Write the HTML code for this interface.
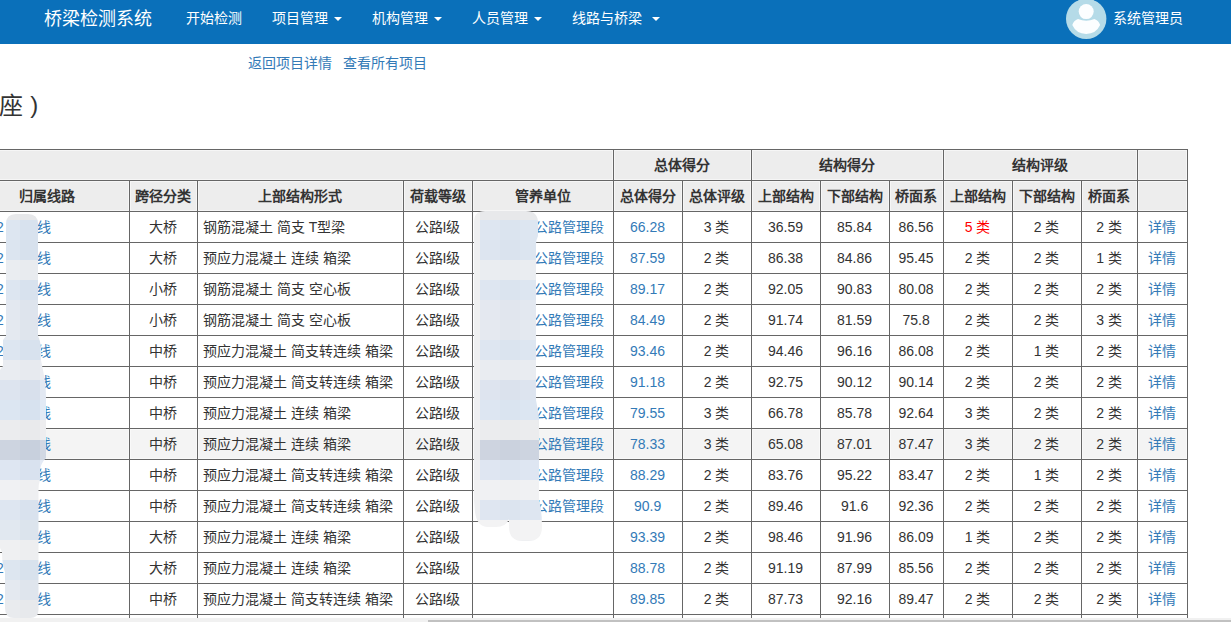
<!DOCTYPE html>
<html lang="zh-CN">
<head>
<meta charset="utf-8">
<title>桥梁检测系统</title>
<style>
html,body{margin:0;padding:0;}
html{overflow:hidden;width:1231px;height:622px;}
body{width:1231px;height:622px;overflow:hidden;background:#fff;
  font-family:"Liberation Sans",sans-serif;font-size:14px;color:#333;}
#wrap{position:relative;width:1231px;height:622px;overflow:hidden;contain:paint;}
.nav{position:absolute;left:0;top:0;width:1231px;height:44px;background:#0a70ba;}
.nav span.t{position:absolute;color:#fff;white-space:nowrap;line-height:20px;top:8px;font-size:14px;}
.nav span.brand{font-size:18px;left:44px;top:9px;line-height:20px;}
.caret{position:absolute;top:17px;width:0;height:0;border-top:4px solid #fff;border-left:4px solid transparent;border-right:4px solid transparent;}
.lnk{position:absolute;top:53px;line-height:20px;color:#337ab7;white-space:nowrap;}
h3{position:absolute;left:0;top:90px;margin:0;font-size:24px;font-weight:normal;line-height:32px;color:#333;white-space:nowrap;}
table{position:absolute;left:-36px;top:149px;border-collapse:separate;border-spacing:0;table-layout:fixed;
  border-top:1px solid #666;border-left:1px solid #666;width:1224px;}
td,th{box-sizing:border-box;height:31px;padding:0;line-height:30px;border-right:1px solid #666;border-bottom:1px solid #666;
  text-align:center;white-space:nowrap;overflow:hidden;font-size:14px;padding-right:1px;}
th{background:#ededed;font-weight:bold;color:#333;box-shadow:inset 0 0 0 1px #f6f6f6;}
td.l{text-align:left;padding-left:5px;}
td.r{text-align:right;padding-right:9px;}
a{color:#337ab7;text-decoration:none;}
.red{color:#f00;}
tr.hov td{background:#f4f4f4;box-shadow:inset 0 0 0 1px #f9f9f9;}
.c1{display:inline-block;margin-left:26px;}
.gap{display:inline-block;width:33px;}
.no2{display:inline-block;width:8px;}
.sb{position:absolute;left:0;top:618px;width:1231px;height:4px;background:#f1f1f1;}
.sbt{position:absolute;left:428px;top:620px;width:803px;height:2px;background:#c1c1c1;}
.blob{position:absolute;}
</style>
</head>
<body>
<div id="wrap">
<div class="nav">
  <span class="t brand">桥梁检测系统</span>
  <span class="t" style="left:186px">开始检测</span>
  <span class="t" style="left:272px">项目管理</span><i class="caret" style="left:334px"></i>
  <span class="t" style="left:372px">机构管理</span><i class="caret" style="left:434px"></i>
  <span class="t" style="left:472px">人员管理</span><i class="caret" style="left:534px"></i>
  <span class="t" style="left:572px">线路与桥梁</span><i class="caret" style="left:652px"></i>
  <svg style="position:absolute;left:1065px;top:-2px" width="43" height="43" viewBox="1065 -2 43 43">
    <circle cx="1086.2" cy="18.8" r="20.2" fill="#b5dbe8"/>
    <circle cx="1086.2" cy="11.6" r="7.5" fill="#fcfeff"/>
    <path d="M1072.3 25 Q1073.6 20.6 1078 19.1 Q1086.2 22.6 1094.4 19.1 Q1098.8 20.6 1100.1 25 A15.3 15.3 0 0 1 1072.3 25 Z" fill="#fcfeff"/>
  </svg>
  <span class="t" style="left:1113px">系统管理员</span>
</div>
<span class="lnk" style="left:248px">返回项目详情</span>
<span class="lnk" style="left:343px">查看所有项目</span>
<h3><span style="margin-left:-1px">座 <span style="position:relative;top:-1px;left:0.5px">)</span></span></h3>
<table>
<colgroup>
<col style="width:165px"><col style="width:68px"><col style="width:206px"><col style="width:69px"><col style="width:141px">
<col style="width:69px"><col style="width:69px"><col style="width:69px"><col style="width:69px"><col style="width:54px">
<col style="width:69px"><col style="width:69px"><col style="width:56px"><col style="width:50px">
</colgroup>
<tr><th colspan="5"></th><th colspan="2">总体得分</th><th colspan="3">结构得分</th><th colspan="3">结构评级</th><th></th></tr>
<tr><th>归属线路</th><th>跨径分类</th><th>上部结构形式</th><th>荷载等级</th><th>管养单位</th><th>总体得分</th><th>总体评级</th><th>上部结构</th><th>下部结构</th><th>桥面系</th><th>上部结构</th><th>下部结构</th><th>桥面系</th><th></th></tr>
<tr><td class="l"><a class="c1">2<span class="gap"></span>线</a></td><td>大桥</td><td class="l">钢筋混凝土 简支 T型梁</td><td>公路I级</td><td class="r"><a class="c5">公路管理段</a></td><td><a>66.28</a></td><td>3 类</td><td>36.59</td><td>85.84</td><td>86.56</td><td><span class="red">5 类</span></td><td>2 类</td><td>2 类</td><td><a>详情</a></td></tr>
<tr><td class="l"><a class="c1">2<span class="gap"></span>线</a></td><td>大桥</td><td class="l">预应力混凝土 连续 箱梁</td><td>公路I级</td><td class="r"><a class="c5">公路管理段</a></td><td><a>87.59</a></td><td>2 类</td><td>86.38</td><td>84.86</td><td>95.45</td><td>2 类</td><td>2 类</td><td>1 类</td><td><a>详情</a></td></tr>
<tr><td class="l"><a class="c1">2<span class="gap"></span>线</a></td><td>小桥</td><td class="l">钢筋混凝土 简支 空心板</td><td>公路I级</td><td class="r"><a class="c5">公路管理段</a></td><td><a>89.17</a></td><td>2 类</td><td>92.05</td><td>90.83</td><td>80.08</td><td>2 类</td><td>2 类</td><td>2 类</td><td><a>详情</a></td></tr>
<tr><td class="l"><a class="c1">2<span class="gap"></span>线</a></td><td>小桥</td><td class="l">钢筋混凝土 简支 空心板</td><td>公路I级</td><td class="r"><a class="c5">公路管理段</a></td><td><a>84.49</a></td><td>2 类</td><td>91.74</td><td>81.59</td><td>75.8</td><td>2 类</td><td>2 类</td><td>3 类</td><td><a>详情</a></td></tr>
<tr><td class="l"><a class="c1">2<span class="gap"></span>线</a></td><td>中桥</td><td class="l">预应力混凝土 简支转连续 箱梁</td><td>公路I级</td><td class="r"><a class="c5">公路管理段</a></td><td><a>93.46</a></td><td>2 类</td><td>94.46</td><td>96.16</td><td>86.08</td><td>2 类</td><td>1 类</td><td>2 类</td><td><a>详情</a></td></tr>
<tr><td class="l"><a class="c1"><span class="no2"></span><span class="gap"></span>线</a></td><td>中桥</td><td class="l">预应力混凝土 简支转连续 箱梁</td><td>公路I级</td><td class="r"><a class="c5">公路管理段</a></td><td><a>91.18</a></td><td>2 类</td><td>92.75</td><td>90.12</td><td>90.14</td><td>2 类</td><td>2 类</td><td>2 类</td><td><a>详情</a></td></tr>
<tr><td class="l"><a class="c1"><span class="no2"></span><span class="gap"></span>线</a></td><td>中桥</td><td class="l">预应力混凝土 连续 箱梁</td><td>公路I级</td><td class="r"><a class="c5">公路管理段</a></td><td><a>79.55</a></td><td>3 类</td><td>66.78</td><td>85.78</td><td>92.64</td><td>3 类</td><td>2 类</td><td>2 类</td><td><a>详情</a></td></tr>
<tr class="hov"><td class="l"><a class="c1"><span class="no2"></span><span class="gap"></span>线</a></td><td>中桥</td><td class="l">预应力混凝土 连续 箱梁</td><td>公路I级</td><td class="r"><a class="c5">公路管理段</a></td><td><a>78.33</a></td><td>3 类</td><td>65.08</td><td>87.01</td><td>87.47</td><td>3 类</td><td>2 类</td><td>2 类</td><td><a>详情</a></td></tr>
<tr><td class="l"><a class="c1"><span class="no2"></span><span class="gap"></span>线</a></td><td>中桥</td><td class="l">预应力混凝土 简支转连续 箱梁</td><td>公路I级</td><td class="r"><a class="c5">公路管理段</a></td><td><a>88.29</a></td><td>2 类</td><td>83.76</td><td>95.22</td><td>83.47</td><td>2 类</td><td>1 类</td><td>2 类</td><td><a>详情</a></td></tr>
<tr><td class="l"><a class="c1"><span class="no2"></span><span class="gap"></span>线</a></td><td>中桥</td><td class="l">预应力混凝土 简支转连续 箱梁</td><td>公路I级</td><td class="r"><a class="c5">公路管理段</a></td><td><a>90.9</a></td><td>2 类</td><td>89.46</td><td>91.6</td><td>92.36</td><td>2 类</td><td>2 类</td><td>2 类</td><td><a>详情</a></td></tr>
<tr><td class="l"><a class="c1"><span class="no2"></span><span class="gap"></span>线</a></td><td>大桥</td><td class="l">预应力混凝土 连续 箱梁</td><td>公路I级</td><td class="r"></td><td><a>93.39</a></td><td>2 类</td><td>98.46</td><td>91.96</td><td>86.09</td><td>1 类</td><td>2 类</td><td>2 类</td><td><a>详情</a></td></tr>
<tr><td class="l"><a class="c1">2<span class="gap"></span>线</a></td><td>大桥</td><td class="l">预应力混凝土 连续 箱梁</td><td>公路I级</td><td class="r"></td><td><a>88.78</a></td><td>2 类</td><td>91.19</td><td>87.99</td><td>85.56</td><td>2 类</td><td>2 类</td><td>2 类</td><td><a>详情</a></td></tr>
<tr><td class="l"><a class="c1">2<span class="gap"></span>线</a></td><td>中桥</td><td class="l">预应力混凝土 简支转连续 箱梁</td><td>公路I级</td><td class="r"></td><td><a>89.85</a></td><td>2 类</td><td>87.73</td><td>92.16</td><td>89.47</td><td>2 类</td><td>2 类</td><td>2 类</td><td><a>详情</a></td></tr>
<tr><td></td><td></td><td></td><td></td><td></td><td></td><td></td><td></td><td></td><td></td><td></td><td></td><td></td><td></td></tr>
</table>
<svg style="position:absolute;left:0;top:0;pointer-events:none" width="1231" height="622" viewBox="0 0 1231 622" shape-rendering="crispEdges">
<defs>
<clipPath id="b1"><path d="M6 224 Q6 214 16 214 L28 214 Q38 214 38 224 L38 336 Q41 342 41 350 L41 360 Q42 366 43 370 Q46 385 46 397 L46 458 Q41 463 40 470 L40 480 Q38.5 484 38.5 490 L38.5 610 Q38.5 618 30 618 L14 618 Q5 618 5 608 L5 572 Q2 565 2 552 L0 548 L0 370 L3 366 L3 340 L6 336 Z"/></clipPath>
<clipPath id="b2"><path d="M474 222 Q474 211 485 211 L526 211 Q538 211 538 223 L538 236 Q536 240 536 244 L536 400 Q538 410 539 418 L539 500 Q542 510 542 527 Q542 541 528 541 L523 541 Q509 541 509 527 L509 519 Q506 527 496 527 L488 527 Q477 527 475 512 L474 500 Z"/></clipPath>
</defs>
<g clip-path="url(#b1)">
<rect x="0" y="200" width="20" height="20" fill="#e8e9eb"/>
<rect x="20" y="200" width="20" height="20" fill="#e6e7e9"/>
<rect x="40" y="200" width="20" height="20" fill="#eaeaec"/>
<rect x="0" y="220" width="20" height="20" fill="#dde6f1"/>
<rect x="20" y="220" width="20" height="20" fill="#d8e2ee"/>
<rect x="40" y="220" width="20" height="20" fill="#e2eaf4"/>
<rect x="0" y="240" width="20" height="20" fill="#dce5f0"/>
<rect x="20" y="240" width="20" height="20" fill="#d7e1ed"/>
<rect x="40" y="240" width="20" height="20" fill="#e1e9f3"/>
<rect x="0" y="260" width="20" height="20" fill="#eaedf1"/>
<rect x="20" y="260" width="20" height="20" fill="#e8ebef"/>
<rect x="40" y="260" width="20" height="20" fill="#eceef2"/>
<rect x="0" y="280" width="20" height="20" fill="#dde6f1"/>
<rect x="20" y="280" width="20" height="20" fill="#d8e2ee"/>
<rect x="40" y="280" width="20" height="20" fill="#e2eaf4"/>
<rect x="0" y="300" width="20" height="20" fill="#e3e8f0"/>
<rect x="20" y="300" width="20" height="20" fill="#dee4ed"/>
<rect x="40" y="300" width="20" height="20" fill="#e8ecf3"/>
<rect x="0" y="320" width="20" height="20" fill="#e4e9f0"/>
<rect x="20" y="320" width="20" height="20" fill="#dfe5ed"/>
<rect x="40" y="320" width="20" height="20" fill="#e9edf3"/>
<rect x="0" y="340" width="20" height="20" fill="#dde6f1"/>
<rect x="20" y="340" width="20" height="20" fill="#d8e2ee"/>
<rect x="40" y="340" width="20" height="20" fill="#e2eaf4"/>
<rect x="0" y="360" width="20" height="20" fill="#e9ecf1"/>
<rect x="20" y="360" width="20" height="20" fill="#e7eaef"/>
<rect x="40" y="360" width="20" height="20" fill="#ebedf2"/>
<rect x="0" y="380" width="20" height="20" fill="#dde4ef"/>
<rect x="20" y="380" width="20" height="20" fill="#d8e0ec"/>
<rect x="40" y="380" width="20" height="20" fill="#e2e8f2"/>
<rect x="0" y="400" width="20" height="20" fill="#dce6f2"/>
<rect x="20" y="400" width="20" height="20" fill="#d7e2ef"/>
<rect x="40" y="400" width="20" height="20" fill="#e1eaf5"/>
<rect x="0" y="420" width="20" height="20" fill="#ebecee"/>
<rect x="20" y="420" width="20" height="20" fill="#e9eaec"/>
<rect x="40" y="420" width="20" height="20" fill="#ededef"/>
<rect x="0" y="440" width="20" height="20" fill="#cdd4e0"/>
<rect x="20" y="440" width="20" height="20" fill="#c8d0dd"/>
<rect x="40" y="440" width="20" height="20" fill="#d2d8e3"/>
<rect x="0" y="460" width="20" height="20" fill="#dee6f2"/>
<rect x="20" y="460" width="20" height="20" fill="#d9e2ef"/>
<rect x="40" y="460" width="20" height="20" fill="#e3eaf5"/>
<rect x="0" y="480" width="20" height="20" fill="#f0f1f3"/>
<rect x="20" y="480" width="20" height="20" fill="#eeeff1"/>
<rect x="40" y="480" width="20" height="20" fill="#f2f2f4"/>
<rect x="0" y="500" width="20" height="20" fill="#dee6f1"/>
<rect x="20" y="500" width="20" height="20" fill="#d9e2ee"/>
<rect x="40" y="500" width="20" height="20" fill="#e3eaf4"/>
<rect x="0" y="520" width="20" height="20" fill="#e1e8f0"/>
<rect x="20" y="520" width="20" height="20" fill="#dce4ed"/>
<rect x="40" y="520" width="20" height="20" fill="#e6ecf3"/>
<rect x="0" y="540" width="20" height="20" fill="#eff0f2"/>
<rect x="20" y="540" width="20" height="20" fill="#edeef0"/>
<rect x="40" y="540" width="20" height="20" fill="#f1f1f3"/>
<rect x="0" y="560" width="20" height="20" fill="#dde6f0"/>
<rect x="20" y="560" width="20" height="20" fill="#d8e2ed"/>
<rect x="40" y="560" width="20" height="20" fill="#e2eaf3"/>
<rect x="0" y="580" width="20" height="20" fill="#e4e9f0"/>
<rect x="20" y="580" width="20" height="20" fill="#dfe5ed"/>
<rect x="40" y="580" width="20" height="20" fill="#e9edf3"/>
<rect x="0" y="600" width="20" height="20" fill="#e9ebee"/>
<rect x="20" y="600" width="20" height="20" fill="#e7e9ec"/>
<rect x="40" y="600" width="20" height="20" fill="#ebecef"/>
</g>
<g clip-path="url(#b2)">
<rect x="460" y="200" width="20" height="20" fill="#f0f0f0"/>
<rect x="480" y="200" width="20" height="20" fill="#e8e9eb"/>
<rect x="500" y="200" width="20" height="20" fill="#e7e8ea"/>
<rect x="520" y="200" width="20" height="20" fill="#e8e9eb"/>
<rect x="540" y="200" width="20" height="20" fill="#e9eaeb"/>
<rect x="460" y="220" width="20" height="20" fill="#eeeff1"/>
<rect x="480" y="220" width="20" height="20" fill="#dee6f1"/>
<rect x="500" y="220" width="20" height="20" fill="#dbe4ef"/>
<rect x="520" y="220" width="20" height="20" fill="#dde6f1"/>
<rect x="540" y="220" width="20" height="20" fill="#e0e8f2"/>
<rect x="460" y="240" width="20" height="20" fill="#eeeff1"/>
<rect x="480" y="240" width="20" height="20" fill="#dde5f0"/>
<rect x="500" y="240" width="20" height="20" fill="#dae3ee"/>
<rect x="520" y="240" width="20" height="20" fill="#dce5f0"/>
<rect x="540" y="240" width="20" height="20" fill="#dfe7f1"/>
<rect x="460" y="260" width="20" height="20" fill="#f0f1f1"/>
<rect x="480" y="260" width="20" height="20" fill="#eaedf1"/>
<rect x="500" y="260" width="20" height="20" fill="#e9ecf0"/>
<rect x="520" y="260" width="20" height="20" fill="#eaedf1"/>
<rect x="540" y="260" width="20" height="20" fill="#ebeef1"/>
<rect x="460" y="280" width="20" height="20" fill="#eeeff1"/>
<rect x="480" y="280" width="20" height="20" fill="#dee6f1"/>
<rect x="500" y="280" width="20" height="20" fill="#dbe4ef"/>
<rect x="520" y="280" width="20" height="20" fill="#dde6f1"/>
<rect x="540" y="280" width="20" height="20" fill="#e0e8f2"/>
<rect x="460" y="300" width="20" height="20" fill="#eff0f1"/>
<rect x="480" y="300" width="20" height="20" fill="#e4e8f0"/>
<rect x="500" y="300" width="20" height="20" fill="#e1e6ee"/>
<rect x="520" y="300" width="20" height="20" fill="#e3e8f0"/>
<rect x="540" y="300" width="20" height="20" fill="#e6eaf1"/>
<rect x="460" y="320" width="20" height="20" fill="#eff0f1"/>
<rect x="480" y="320" width="20" height="20" fill="#e5e9f0"/>
<rect x="500" y="320" width="20" height="20" fill="#e2e7ee"/>
<rect x="520" y="320" width="20" height="20" fill="#e4e9f0"/>
<rect x="540" y="320" width="20" height="20" fill="#e7ebf1"/>
<rect x="460" y="340" width="20" height="20" fill="#eeeff1"/>
<rect x="480" y="340" width="20" height="20" fill="#dee6f1"/>
<rect x="500" y="340" width="20" height="20" fill="#dbe4ef"/>
<rect x="520" y="340" width="20" height="20" fill="#dde6f1"/>
<rect x="540" y="340" width="20" height="20" fill="#e0e8f2"/>
<rect x="460" y="360" width="20" height="20" fill="#f0f0f1"/>
<rect x="480" y="360" width="20" height="20" fill="#e9ecf1"/>
<rect x="500" y="360" width="20" height="20" fill="#e8ebf0"/>
<rect x="520" y="360" width="20" height="20" fill="#e9ecf1"/>
<rect x="540" y="360" width="20" height="20" fill="#eaedf1"/>
<rect x="460" y="380" width="20" height="20" fill="#eeeff1"/>
<rect x="480" y="380" width="20" height="20" fill="#dee4ef"/>
<rect x="500" y="380" width="20" height="20" fill="#dbe2ed"/>
<rect x="520" y="380" width="20" height="20" fill="#dde4ef"/>
<rect x="540" y="380" width="20" height="20" fill="#e0e6f0"/>
<rect x="460" y="400" width="20" height="20" fill="#eeeff2"/>
<rect x="480" y="400" width="20" height="20" fill="#dde6f2"/>
<rect x="500" y="400" width="20" height="20" fill="#dae4f0"/>
<rect x="520" y="400" width="20" height="20" fill="#dce6f2"/>
<rect x="540" y="400" width="20" height="20" fill="#dfe8f3"/>
<rect x="460" y="420" width="20" height="20" fill="#f0f0f1"/>
<rect x="480" y="420" width="20" height="20" fill="#ebecee"/>
<rect x="500" y="420" width="20" height="20" fill="#eaebed"/>
<rect x="520" y="420" width="20" height="20" fill="#ebecee"/>
<rect x="540" y="420" width="20" height="20" fill="#ecedee"/>
<rect x="460" y="440" width="20" height="20" fill="#ebecee"/>
<rect x="480" y="440" width="20" height="20" fill="#ced4e0"/>
<rect x="500" y="440" width="20" height="20" fill="#cbd2de"/>
<rect x="520" y="440" width="20" height="20" fill="#cdd4e0"/>
<rect x="540" y="440" width="20" height="20" fill="#d0d6e1"/>
<rect x="460" y="460" width="20" height="20" fill="#eeeff2"/>
<rect x="480" y="460" width="20" height="20" fill="#dfe6f2"/>
<rect x="500" y="460" width="20" height="20" fill="#dce4f0"/>
<rect x="520" y="460" width="20" height="20" fill="#dee6f2"/>
<rect x="540" y="460" width="20" height="20" fill="#e1e8f3"/>
<rect x="460" y="480" width="20" height="20" fill="#f1f1f2"/>
<rect x="480" y="480" width="20" height="20" fill="#f0f1f3"/>
<rect x="500" y="480" width="20" height="20" fill="#eff0f2"/>
<rect x="520" y="480" width="20" height="20" fill="#f0f1f3"/>
<rect x="540" y="480" width="20" height="20" fill="#f1f2f3"/>
<rect x="460" y="500" width="20" height="20" fill="#eeeff1"/>
<rect x="480" y="500" width="20" height="20" fill="#dfe6f1"/>
<rect x="500" y="500" width="20" height="20" fill="#dce4ef"/>
<rect x="520" y="500" width="20" height="20" fill="#dee6f1"/>
<rect x="540" y="500" width="20" height="20" fill="#e1e8f2"/>
<rect x="460" y="520" width="20" height="20" fill="#f2f2f2"/>
<rect x="480" y="520" width="20" height="20" fill="#f3f3f4"/>
<rect x="500" y="520" width="20" height="20" fill="#f2f2f3"/>
<rect x="520" y="520" width="20" height="20" fill="#f3f3f4"/>
<rect x="540" y="520" width="20" height="20" fill="#f4f4f4"/>
<rect x="460" y="540" width="20" height="20" fill="#f1f1f2"/>
<rect x="480" y="540" width="20" height="20" fill="#eff0f2"/>
<rect x="500" y="540" width="20" height="20" fill="#eeeff1"/>
<rect x="520" y="540" width="20" height="20" fill="#eff0f2"/>
<rect x="540" y="540" width="20" height="20" fill="#f0f1f2"/>
</g>
</svg>
<div class="sb"></div><div class="sbt"></div>
</div>
</body>
</html>
